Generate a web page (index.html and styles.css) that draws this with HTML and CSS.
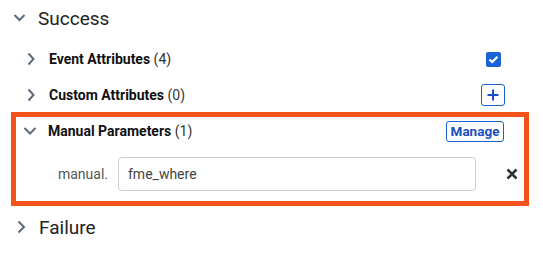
FILE: index.html
```html
<!DOCTYPE html>
<html>
<head>
<meta charset="utf-8">
<link rel="stylesheet" href="styles.css">
</head>
<body>
<div class="panel">
  <div class="section-head">
    <span class="chev"><svg width="16" height="16" viewBox="0 0 16 16"><polyline points="3.5,5 8.5,10 13.5,5" /></svg></span>
    <span class="section-title">Success</span>
  </div>
  <div class="sub-list">
    <div class="row">
      <span class="chev"><svg width="16" height="16" viewBox="0 0 16 16"><polyline points="5.5,2.5 10.5,8 5.5,13.5" /></svg></span>
      <span class="row-label"><b>Event Attributes</b> (4)</span>
      <span class="ctrl"><span class="checkbox"><svg width="15" height="15" viewBox="0 0 15 15"><polyline points="3.5,7.5 6.2,10 11.5,4.8" /></svg></span></span>
    </div>
    <div class="row row-short">
      <span class="chev"><svg width="16" height="16" viewBox="0 0 16 16"><polyline points="5.5,2.5 10.5,8 5.5,13.5" /></svg></span>
      <span class="row-label"><b>Custom Attributes</b> (0)</span>
      <span class="ctrl"><button class="plus-btn"><svg width="12" height="12" viewBox="0 0 12 12"><line x1="6" y1="0.5" x2="6" y2="11.5" /><line x1="0.5" y1="6" x2="11.5" y2="6" /></svg></button></span>
    </div>
    <div class="box">
      <div class="box-head">
        <span class="chev"><svg width="16" height="16" viewBox="0 0 16 16"><polyline points="2.5,5 8,10.5 13.5,5" /></svg></span>
        <span class="row-label"><b>Manual Parameters</b> (1)</span>
        <button class="manage-btn">Manage</button>
      </div>
      <div class="param-row">
        <span class="param-label">manual.</span>
        <div class="param-input">fme_where</div>
        <span class="remove"><svg width="12" height="12" viewBox="0 0 12 12"><line x1="1.5" y1="1.5" x2="10.5" y2="10.5" /><line x1="10.5" y1="1.5" x2="1.5" y2="10.5" /></svg></span>
      </div>
    </div>
  </div>
  <div class="section-head failure">
    <span class="chev"><svg width="16" height="16" viewBox="0 0 16 16"><polyline points="5.5,2.5 11,8 5.5,13.5" /></svg></span>
    <span class="section-title">Failure</span>
  </div>
</div>
</body>
</html>
```
FILE: styles.css
```css
html, body {
  margin: 0;
  padding: 0;
  background: #ffffff;
}
body {
  font-family: Roboto, "Liberation Sans", Arial, sans-serif;
  color: #222;
}
.panel {
  width: 543px;
}
.chev {
  display: flex;
  width: 16px;
  height: 16px;
  flex: none;
}
.chev svg polyline {
  fill: none;
  stroke: #5b6b7b;
  stroke-width: 2;
  stroke-linecap: butt;
  stroke-linejoin: miter;
}
.section-head {
  display: flex;
  align-items: center;
  height: 36px;
  padding-left: 11px;
  gap: 11px;
}
.section-title {
  font-size: 19px;
  color: #222;
}
.failure {
  margin-top: 3px;
  padding-left: 13px;
  gap: 10px;
}
.sub-list {
  padding-top: 5px;
}
.row {
  display: flex;
  align-items: center;
  height: 36px;
  padding-left: 23px;
  padding-right: 38px;
  gap: 10px;
}
.row-short {
  height: 35px;
}
.row-label {
  font-size: 14px;
  color: #333;
  flex: 1;
}
.row-label b {
  font-weight: 700;
  color: #111;
}
.ctrl {
  width: 24px;
  display: flex;
  justify-content: center;
  align-items: center;
}
.checkbox {
  width: 15px;
  height: 15px;
  border-radius: 2px;
  background: #1a62d6;
  display: flex;
}
.checkbox polyline {
  fill: none;
  stroke: #ffffff;
  stroke-width: 2.2;
}
.plus-btn {
  width: 24px;
  height: 22px;
  border: 1.5px solid #1a5fd0;
  border-radius: 3px;
  background: #fff;
  padding: 0;
  display: flex;
  align-items: center;
  justify-content: center;
}
.plus-btn line {
  stroke: #1a4fc8;
  stroke-width: 2;
}
.box {
  margin-left: 11px;
  width: 518px;
  box-sizing: border-box;
  border: 5px solid #f4531b;
}
.box-head {
  display: flex;
  align-items: center;
  height: 28px;
  padding-left: 6px;
  padding-right: 20px;
  gap: 10px;
}
.manage-btn {
  width: 58px;
  height: 21px;
  box-sizing: border-box;
  border: 1.5px solid #1a5fd0;
  border-radius: 3px;
  background: #fff;
  color: #1a4fc0;
  font-family: Roboto, "Liberation Sans", Arial, sans-serif;
  font-weight: 700;
  font-size: 13.5px;
  padding: 0;
  display: flex;
  align-items: center;
  justify-content: center;
}
.param-row {
  display: flex;
  align-items: center;
  padding-top: 12px;
  padding-bottom: 10px;
  padding-right: 4px;
}
.param-label {
  width: 92px;
  margin-right: 10px;
  text-align: right;
  font-size: 14px;
  color: #555;
}
.param-input {
  flex: 1;
  height: 34px;
  box-sizing: border-box;
  border: 1px solid #cccccc;
  border-radius: 4px;
  padding-left: 9px;
  display: flex;
  align-items: center;
  font-size: 14px;
  color: #444;
}
.remove {
  width: 16px;
  margin-left: 28px;
  display: flex;
  justify-content: center;
}
.remove line {
  stroke: #333;
  stroke-width: 2.6;
}
```
